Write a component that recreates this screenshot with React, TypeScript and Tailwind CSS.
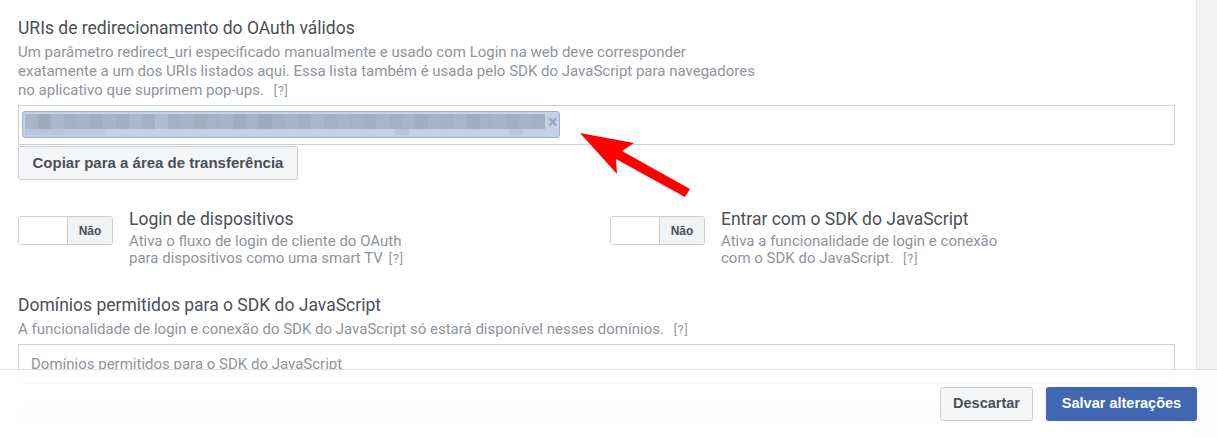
import React from 'react';

// blurred pixel blocks inside the redacted URI chip
const topBlocks = [
  'bg-[#a9b5c9]', 'bg-[#9fabc0]', 'bg-[#aab6ca]', 'bg-[#a3afc4]', 'bg-[#a6b2c6]', 'bg-[#a0adc2]',
  'bg-[#a8b4c8]', 'bg-[#a2aec3]', 'bg-[#abb7cb]', 'bg-[#a4b0c5]', 'bg-[#b0bccf]', 'bg-[#a3afc3]',
  'bg-[#a6b2c7]', 'bg-[#a1adc1]', 'bg-[#a5b1c5]', 'bg-[#a8b4c8]', 'bg-[#a0acc0]', 'bg-[#a6b2c6]',
  'bg-[#9eaabf]', 'bg-[#a3afc3]', 'bg-[#a7b3c7]', 'bg-[#a2aec2]', 'bg-[#aab6ca]', 'bg-[#a4b0c4]',
  'bg-[#a8b4c9]', 'bg-[#a5b1c5]', 'bg-[#a2aec3]', 'bg-[#a9b5c9]', 'bg-[#a3afc4]', 'bg-[#a6b2c6]',
  'bg-[#a1adc2]', 'bg-[#a7b3c7]', 'bg-[#a4b0c4]', 'bg-[#a9b5c8]', 'bg-[#a0acc1]', 'bg-[#a5b1c6]',
  'bg-[#a8b4c8]', 'bg-[#a2aec2]', 'bg-[#a6b2c6]', 'bg-[#a3afc3]',
];

const Hint = () => <span className="ml-1.5 text-[12px] tracking-[1px] text-[#90949c]">[?]</span>;

const Toggle = () => (
  <div className="mt-[7px] flex h-[29px] w-[95px] shrink-0 overflow-hidden rounded-[3px] border border-[#ccd0d5]">
    <div className="w-[48px] bg-white" />
    <div className="flex flex-1 items-center justify-center border-l border-[#ccd0d5] bg-[#f2f3f5] font-['Liberation_Sans',Arial,sans-serif] text-[12px] font-bold text-[#4b4f56]">
      Não
    </div>
  </div>
);

interface SettingProps {
  title: string;
  lines: string[];
}

const Setting = ({ title, lines }: SettingProps) => (
  <div className="flex gap-4">
    <Toggle />
    <div>
      <div className="text-[17.5px] leading-[20px] text-[#4b4f56]">{title}</div>
      <div className="mt-1 text-[15px] leading-[17px] text-[#90949c]">
        {lines.map((l, i) => (
          <div key={i}>
            {l}
            {i === lines.length - 1 && <Hint />}
          </div>
        ))}
      </div>
    </div>
  </div>
);

export default function App() {
  return (
    <div className="relative flex h-[437px] w-[1217px] overflow-hidden bg-[#f2f2f2] font-['Roboto','Liberation_Sans',sans-serif]">
      {/* Main panel */}
      <div className="w-[1197px] shrink-0 border-r border-[#e5e5e5] bg-white pl-[18px] pr-[21px] pt-[18px]">
        <div className="text-[17.5px] leading-[20px] text-[#4b4f56]">URIs de redirecionamento do OAuth válidos</div>
        <div className="mt-[5px] text-[15px] leading-[19px] text-[#90949c]">
          <div>Um parâmetro redirect_uri especificado manualmente e usado com Login na web deve corresponder</div>
          <div>exatamente a um dos URIs listados aqui. Essa lista também é usada pelo SDK do JavaScript para navegadores</div>
          <div>
            no aplicativo que suprimem pop-ups. <Hint />
          </div>
        </div>

        <div className="mt-1 h-[40px] border border-[#ccd0d5] bg-white pl-[3px] pt-[5px]">
          <div className="flex h-[27px] w-[538px] items-start rounded-[3px] border border-[#9cb0d3] bg-[#c4d2e7] pl-[2px] pt-[2px]">
            <div className="flex flex-col">
              <div className="flex h-[15px]">
                {topBlocks.map((c, i) => (
                  <div key={i} className={`h-full w-[13px] ${c}`} />
                ))}
              </div>
              <div className="flex h-[6px]">
                <div className="w-[40px] bg-[#b8c6dc]" />
                <div className="w-[40px] bg-[#bccadf]" />
                <div className="w-[290px]" />
                <div className="w-[14px] bg-[#b7c5da]" />
                <div className="w-[100px]" />
                <div className="w-[14px] bg-[#b9c7dc]" />
              </div>
            </div>
            <span className="ml-[3px] text-[18px] leading-[16px] font-bold text-[#98a3b4]">×</span>
          </div>
        </div>

        <button className="mt-[1px] flex h-[34px] w-[280px] items-center justify-center rounded-[2px] border border-[#ccd0d5] bg-[#f5f6f7] font-['Liberation_Sans',Arial,sans-serif] text-[15px] font-bold text-[#4b4f56]">
          Copiar para a área de transferência
        </button>

        <div className="mt-[29px] grid grid-cols-[592px_1fr]">
          <Setting
            title="Login de dispositivos"
            lines={['Ativa o fluxo de login de cliente do OAuth', 'para dispositivos como uma smart TV']}
          />
          <Setting
            title="Entrar com o SDK do JavaScript"
            lines={['Ativa a funcionalidade de login e conexão', 'com o SDK do JavaScript. ']}
          />
        </div>

        <div className="mt-[27px] text-[17.5px] leading-[20px] text-[#4b4f56]">Domínios permitidos para o SDK do JavaScript</div>
        <div className="mt-[5px] text-[15px] leading-[19px] text-[#90949c]">
          A funcionalidade de login e conexão do SDK do JavaScript só estará disponível nesses domínios. <Hint />
        </div>
        <div className="mt-[4px] flex h-[40px] items-center border border-[#ccd0d5] px-3 text-[15px] text-[#90949c]">
          Domínios permitidos para o SDK do JavaScript
        </div>
        <div className="mt-[20px] h-[20px] bg-[#f6f6f6]" />
      </div>

      {/* Sticky footer */}
      <div className="absolute bottom-0 left-0 flex h-[68px] w-full items-start justify-end gap-[13px] border-t border-[#dddfe2] bg-white/90 pr-[20px] pt-[17px] font-['Liberation_Sans',Arial,sans-serif]">
        <button className="flex h-[34px] w-[93px] items-center justify-center rounded-[3px] border border-[#ccd0d5] bg-[#f5f6f7] text-[14.5px] font-bold text-[#4b4f56]">
          Descartar
        </button>
        <button className="flex h-[34px] w-[151px] items-center justify-center rounded-[3px] bg-[#4267b2] text-[14.5px] font-bold text-white">
          Salvar alterações
        </button>
      </div>

      {/* Red annotation arrow */}
      <svg className="pointer-events-none absolute left-0 top-0" width="1217" height="437" viewBox="0 0 1217 437">
        <polygon
          points="580,133 634,143 622,151 690,189 685,197 616,159 617,174"
          fill="#ff0000"
        />
      </svg>
    </div>
  );
}
